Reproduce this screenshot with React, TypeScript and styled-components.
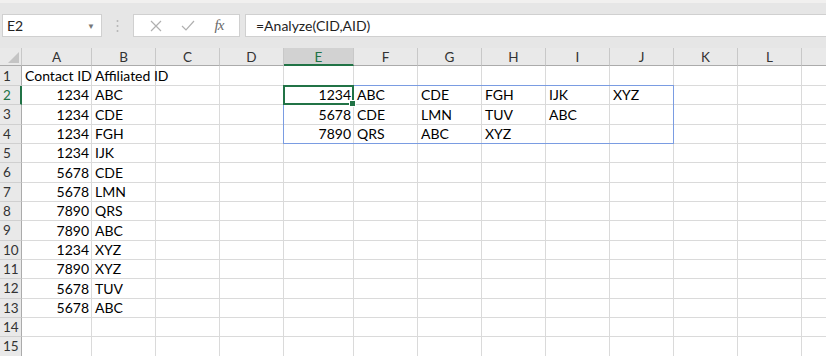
import React from "react";
import styled, { createGlobalStyle, css } from "styled-components";

const GlobalStyle = createGlobalStyle`
  html, body { margin: 0; padding: 0; background: #ffffff; overflow: hidden; }
  body { font-family: "Lato", "Open Sans", sans-serif; }
`;

// last column is only a sliver at the right edge, its label sits off screen
const COLS = ["A", "B", "C", "D", "E", "F", "G", "H", "I", "J", "K", "L", ""];
const WIDTHS = [70, 64, 64, 64, 70, 64, 64, 64, 64, 64, 64, 64, 64];
const ROW_COUNT = 15;
const ROW_H = 19.33;

type CellVal = { v: string; num?: boolean };
const sheet: Record<string, CellVal> = {};
const put = (ref: string, v: string, num = false) => (sheet[ref] = { v, num });

put("A1", "Contact ID");
put("B1", "Affiliated ID");
const pairs: [string, string][] = [
  ["1234", "ABC"], ["1234", "CDE"], ["1234", "FGH"], ["1234", "IJK"],
  ["5678", "CDE"], ["5678", "LMN"], ["7890", "QRS"], ["7890", "ABC"],
  ["1234", "XYZ"], ["7890", "XYZ"], ["5678", "TUV"], ["5678", "ABC"],
];
pairs.forEach(([id, aff], i) => {
  put(`A${i + 2}`, id, true);
  put(`B${i + 2}`, aff);
});
const result: string[][] = [
  ["1234", "ABC", "CDE", "FGH", "IJK", "XYZ"],
  ["5678", "CDE", "LMN", "TUV", "ABC"],
  ["7890", "QRS", "ABC", "XYZ"],
];
result.forEach((row, r) => {
  row.forEach((val, c) => put(`${COLS[4 + c]}${r + 2}`, val, c === 0));
});

const Page = styled.div`
  width: 826px;
  height: 356px;
  overflow: hidden;
  display: flex;
  flex-direction: column;
  background: #e6e6e6;
`;

const TitleStrip = styled.div`
  height: 3px;
  background: #f1f0ef;
  flex: none;
`;

const Toolbar = styled.div`
  height: 45px;
  flex: none;
  display: flex;
  align-items: flex-start;
  padding: 11px 0 0 2px;
  box-sizing: border-box;
`;

const Box = styled.div`
  height: 23px;
  background: #ffffff;
  border: 1px solid #d0d0d0;
  box-sizing: border-box;
  display: flex;
  align-items: center;
  font-size: 14px;
  color: #222;
`;

const NameBox = styled(Box)`
  width: 100px;
  padding: 0 6px 0 4px;
  justify-content: space-between;
`;

const Caret = styled.span`
  font-size: 8px;
  color: #777;
`;

const Grip = styled.div`
  width: 31px;
  height: 23px;
  display: flex;
  align-items: center;
  justify-content: center;
`;

const ButtonBox = styled(Box)`
  width: 107px;
  justify-content: space-around;
  padding: 0 6px;
  color: #a8a8a8;
`;

const FormulaBox = styled(Box)`
  flex: 1;
  margin-left: 5px;
  border-right: none;
  padding-left: 10px;
  font-size: 14px;
  color: #1e1e1e;
`;

const Fx = styled.span`
  font-family: "Liberation Serif", serif;
  font-style: italic;
  font-size: 15px;
  color: #6a6a6a;
  letter-spacing: -1px;
`;

const Grid = styled.div`
  position: relative;
  flex: 1;
  display: grid;
  grid-template-columns: 22px ${WIDTHS.map((w) => `${w}px`).join(" ")};
  grid-template-rows: 18px 20px repeat(${ROW_COUNT - 1}, ${ROW_H}px);
  background: #ffffff;
`;

const Corner = styled.div`
  background: #e9e9e9;
  border-right: 1px solid #c8c8c8;
  border-bottom: 1px solid #ababab;
  position: relative;
  &::after {
    content: "";
    position: absolute;
    right: 2px;
    bottom: 2px;
    border-style: solid;
    border-width: 0 0 11px 11px;
    border-color: transparent transparent #c4c4c4 transparent;
  }
`;

const ColHead = styled.div<{ $sel?: boolean }>`
  background: ${(p) => (p.$sel ? "#d2d2d2" : "#e9e9e9")};
  color: ${(p) => (p.$sel ? "#217346" : "#333")};
  border-right: 1px solid #c8c8c8;
  border-bottom: ${(p) => (p.$sel ? "2px solid #217346" : "1px solid #ababab")};
  box-sizing: border-box;
  display: flex;
  align-items: center;
  justify-content: center;
  font-size: 13.5px;
  padding-top: 1px;
`;

const RowHead = styled.div<{ $sel?: boolean }>`
  background: #e9e9e9;
  color: ${(p) => (p.$sel ? "#217346" : "#333")};
  border-right: ${(p) => (p.$sel ? "2px solid #217346" : "1px solid #ababab")};
  border-bottom: 1px solid #d0d0d0;
  box-sizing: border-box;
  display: flex;
  align-items: center;
  padding-left: 3px;
  font-size: 13.5px;
`;

const Cell = styled.div<{ $num?: boolean }>`
  border-right: 1px solid #dadada;
  border-bottom: 1px solid #dadada;
  box-sizing: border-box;
  font-size: 14px;
  color: #000;
  white-space: nowrap;
  display: flex;
  align-items: flex-end;
  padding: 0 2px 1px 3px;
  min-width: 0;
  ${(p) =>
    p.$num &&
    css`
      justify-content: flex-end;
    `}
`;

const CellText = styled.span`
  position: relative;
  z-index: 1;
`;

const RangeBox = styled.div`
  position: absolute;
  outline: 1px solid rgb(122, 156, 226);
  outline-offset: -1px;
  pointer-events: none;
  z-index: 2;
`;

const ActiveBox = styled.div`
  position: absolute;
  border: 2px solid #217346;
  box-sizing: border-box;
  z-index: 3;
  &::after {
    content: "";
    position: absolute;
    right: -4px;
    bottom: -4px;
    width: 5px;
    height: 5px;
    background: #217346;
    border: 1px solid #fff;
  }
`;

const colLeft = (i: number) => 22 + WIDTHS.slice(0, i).reduce((a, b) => a + b, 0);
const rowTop = (r: number) => 18 + 20 + (r - 2) * ROW_H;

export default function App() {
  const rows = Array.from({ length: ROW_COUNT }, (_, i) => i + 1);
  return (
    <>
      <GlobalStyle />
      <Page>
        <TitleStrip />
        <Toolbar>
          <NameBox>
            <span>E2</span>
            <Caret>▼</Caret>
          </NameBox>
          <Grip>
            <svg width="3" height="14" viewBox="0 0 3 14">
              <circle cx="1.5" cy="2" r="1" fill="#b5b5b5" />
              <circle cx="1.5" cy="7" r="1" fill="#b5b5b5" />
              <circle cx="1.5" cy="12" r="1" fill="#b5b5b5" />
            </svg>
          </Grip>
          <ButtonBox>
            <svg width="12" height="12" viewBox="0 0 12 12">
              <path d="M1 1 L11 11 M11 1 L1 11" stroke="#b0b0b0" strokeWidth="1.2" fill="none" />
            </svg>
            <svg width="14" height="11" viewBox="0 0 14 11">
              <path d="M1 6 L5 10 L13 1" stroke="#b0b0b0" strokeWidth="1.2" fill="none" />
            </svg>
            <Fx>fx</Fx>
          </ButtonBox>
          <FormulaBox>=Analyze(CID,AID)</FormulaBox>
        </Toolbar>
        <Grid>
          <Corner />
          {COLS.map((c, i) => (
            <ColHead key={i} $sel={c === "E"}>
              {c}
            </ColHead>
          ))}
          {rows.map((r) => (
            <React.Fragment key={r}>
              <RowHead $sel={r === 2}>{r}</RowHead>
              {COLS.map((c, i) => {
                const cell = c ? sheet[`${c}${r}`] : undefined;
                return (
                  <Cell key={i} $num={cell?.num}>
                    {cell && <CellText>{cell.v}</CellText>}
                  </Cell>
                );
              })}
            </React.Fragment>
          ))}
          <RangeBox
            style={{
              left: colLeft(4) - 1,
              top: Math.round(rowTop(2)) - 1,
              width: colLeft(10) - colLeft(4) + 1,
              height: Math.round(ROW_H * 3) + 1,
            }}
          />
          <ActiveBox
            style={{
              left: colLeft(4) - 1,
              top: Math.round(rowTop(2)) - 1,
              width: WIDTHS[4] + 1,
              height: Math.round(ROW_H) + 1,
            }}
          />
        </Grid>
      </Page>
    </>
  );
}
